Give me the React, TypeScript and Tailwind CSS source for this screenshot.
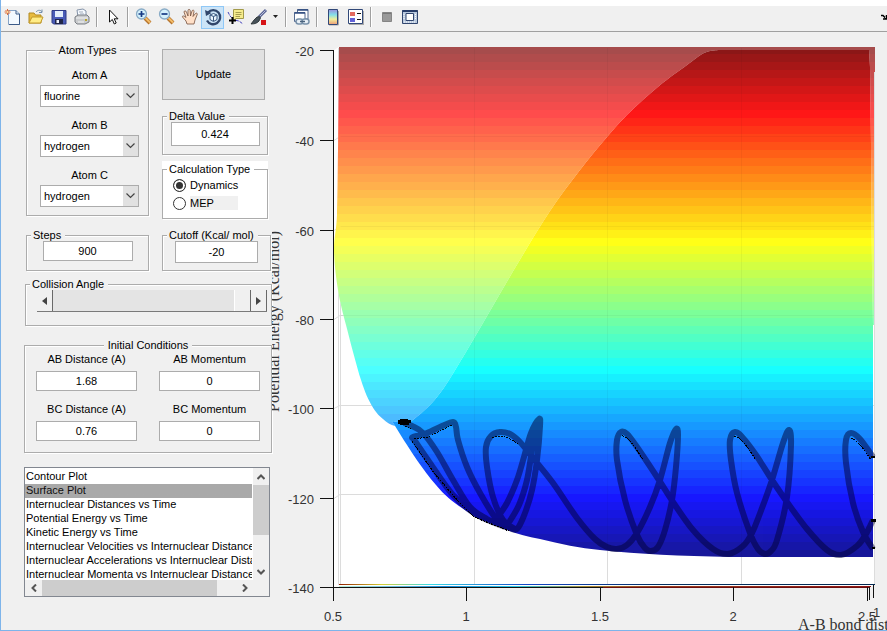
import type { ReactNode } from "react";

type Point = [number, number];

const surfaceBands = Array.from({ length: 64 }, (_, i) => {
    // jet colormap, 64 levels from the top of the surface to the bottom
    const level = (64 - i) / 64;
    const channel = (centre: number) =>
        Math.round(255 * Math.max(0, Math.min(1, 1.5 - Math.abs(4 * level - centre))));
    return { y: 46 + i * 8, fill: `rgb(${channel(3)},${channel(2)},${channel(1)})` };
});

const smooth = (points: Point[]) => {
    let d = `M${points[0][0]} ${points[0][1]}`;
    for (let i = 0; i < points.length - 1; i++) {
        const a = points[Math.max(0, i - 1)];
        const b = points[i];
        const c = points[i + 1];
        const e = points[Math.min(points.length - 1, i + 2)];
        d += `C${b[0] + (c[0] - a[0]) / 6} ${b[1] + (c[1] - a[1]) / 6} ${c[0] - (e[0] - b[0]) / 6} ${c[1] - (e[1] - b[1]) / 6} ${c[0]} ${c[1]}`;
    }
    return d;
};

const backEdge: Point[] = [[338, 150], [337, 215], [334, 250], [338, 290], [346, 325], [361, 380], [372, 406], [383, 419], [395, 426], [409, 424]];

const frontTop: Point[] = [[718, 50], [704, 53], [687, 65], [659, 86], [630, 112], [607, 137], [580, 170], [550, 211], [518, 263], [483, 323], [449, 380], [430, 405], [408, 424]];

const frontBottom = "L392 421L400 434C410 450 423 470 436 485C444 495 453 502 462 508L475 517C500 528 515 534 540 539C560 544 580 548 600 550C640 554 680 556 730 557H873V325L872 268L871 145L870 67L869 50Z";

const trajectory: Point[][] = [
    [[404, 423], [412, 426], [423, 433], [437, 452], [453, 480], [470, 507], [487, 519], [505, 527]],
    [[505, 527], [477, 515], [453, 495], [430, 463], [415, 441], [413, 437], [427, 433], [442, 426], [453, 422], [456, 427], [458, 440], [467, 467], [480, 493], [497, 520], [508, 528]],
    [[497, 518], [507, 503], [517, 480], [524, 457], [531, 433], [539, 419], [540, 426], [537, 460], [532, 490], [525, 513], [517, 529], [508, 527]],
    [[508, 524], [519, 505], [527, 480], [532, 450], [537, 424]],
    [[515, 529], [503, 520], [493, 497], [487, 467], [486, 447], [491, 436], [500, 432], [510, 434], [520, 442], [533, 458], [553, 483], [577, 518], [595, 539], [607, 547], [617, 549], [627, 545], [637, 533], [650, 507], [660, 480], [670, 443], [676, 429], [678, 435], [676, 467], [672, 500], [665, 530], [658, 547], [651, 551], [645, 548], [637, 535], [625, 500], [617, 460], [617, 440], [621, 432], [627, 434], [637, 447], [657, 477], [673, 502], [693, 530], [713, 549], [728, 554], [743, 546], [752, 533], [762, 508], [772, 480], [783, 443], [789, 430], [791, 445], [787, 497], [777, 540], [771, 551], [765, 554], [758, 549], [750, 533], [737, 493], [731, 460], [730, 440], [735, 432], [743, 438], [756, 455], [772, 480], [787, 502], [807, 529], [827, 550], [841, 555], [857, 546], [866, 534], [873, 520]],
    [[873, 549], [863, 532], [853, 503], [846, 463], [846, 440], [851, 433], [860, 439], [873, 457]],
];

const yTicks = [
    { y: 50, label: "-20" },
    { y: 140, label: "-40" },
    { y: 230, label: "-60" },
    { y: 319, label: "-80" },
    { y: 408, label: "-100" },
    { y: 498, label: "-120" },
    { y: 587, label: "-140" },
];

const xTicks = [
    { x: 333, label: "0.5" },
    { x: 466, label: "1" },
    { x: 600, label: "1.5" },
    { x: 733, label: "2" },
    { x: 867, label: "2.5" },
];

const plots = [
    "Contour Plot",
    "Surface Plot",
    "Internuclear Distances vs Time",
    "Potential Energy vs Time",
    "Kinetic Energy vs Time",
    "Internuclear Velocities vs Internuclear Distance",
    "Internuclear Accelerations vs Internuclear Distance",
    "Internuclear Momenta vs Internuclear Distance",
];

const ToolButton = ({ label, active, children }: { label: string; active?: boolean; children: ReactNode }) => (
    <button
        type="button"
        aria-label={label}
        className={`flex h-[23px] w-[23px] shrink-0 items-center justify-center ${active ? "border border-[#90c8f6] bg-[#cce4f7]" : ""}`}
    >
        <svg width="18" height="18" viewBox="0 0 18 18" className="shrink-0" fill="none">
            {children}
        </svg>
    </button>
);

const Separator = () => <div className="mx-[3px] h-5 w-0.5 shrink-0 border-l border-[#a0a0a0] bg-white" />;

const Magnifier = ({ plus }: { plus?: boolean }) => (
    <>
        <path d="M10 10L15 15" stroke="#b7742c" strokeWidth="4" />
        <path d="M10.500 10L15 14.500" stroke="#f4bd69" strokeWidth="2" />
        <circle cx="6.500" cy="6" r="5" fill="#d4f1fc" stroke="#88abc6" strokeWidth="1.300" />
        <path d={plus ? "M3.500 6H9.500M6.500 3V9" : "M3.500 6H9.500"} stroke="#163a84" strokeWidth="1.700" />
    </>
);

const Toolbar = () => (
    <div className="flex h-[26px] items-center overflow-hidden border-b border-[#a0a0a0] bg-[#f0f0f0] pb-[3px]">
        <ToolButton label="New Figure">
            <path d="M4.500 2.500H12L15.500 6V16.500H4.500Z" fill="#f3f9ff" stroke="#86a3c6" />
            <path d="M12 2.500V6H15.500M15.500 6V16.500H5" stroke="#3b5a88" />
            <path d="M3.500 1V7M.5 4H6.500M1.500 2L5.500 6M5.500 2L1.500 6" stroke="#df6d3c" />
            <circle cx="3.500" cy="4" r="1" fill="#ffe4a0" />
        </ToolButton>
        <ToolButton label="Open File">
            <path d="M2 15V5H7L8.500 7H14V15Z" fill="#e8bb40" stroke="#b18a22" />
            <path d="M2 15L5 9H16L13.500 15Z" fill="#ffec86" stroke="#c39a2a" />
            <path d="M9 4C11 1.500 14 2 15 4M15 1.500V4.500H12" stroke="#7491ae" />
        </ToolButton>
        <ToolButton label="Save Figure">
            <path d="M2 2.500H16V16H3.500L2 14.500Z" fill="#4a5cb8" stroke="#2f3b85" />
            <path d="M5 3H13V9H5Z" fill="#e3eefb" />
            <path d="M5 11H13V16H5Z" fill="#202648" />
            <path d="M6.500 12H9V15H6.500Z" fill="#f1f4ff" />
        </ToolButton>
        <ToolButton label="Print Figure">
            <path d="M5 9L4 2L10 1L13 3V9Z" fill="#f6faff" stroke="#8493a8" />
            <path d="M2 9L5 7H14L16 9V14L12 16H4L2 14Z" fill="#c9cbcd" stroke="#7a7e84" />
            <path d="M3 10H15M5 14H11" stroke="#f3f4f5" />
            <path d="M6 4H10M7 6H11" stroke="#a0abba" />
            <path d="M12 12H14" stroke="#b7a32d" strokeWidth="2" />
        </ToolButton>
        <Separator />
        <ToolButton label="Edit Plot">
            <path d="M5.500 2V14L8.300 11.500L10.300 16L12.200 15L10.200 10.800H14Z" fill="#fff" stroke="#111" />
        </ToolButton>
        <Separator />
        <ToolButton label="Zoom In"><Magnifier plus /></ToolButton>
        <ToolButton label="Zoom Out"><Magnifier /></ToolButton>
        <ToolButton label="Pan">
            <path d="M6 16L5 13L1.500 9C1 7.500 3 7.500 5 9.500L3 4C3 2.500 5 2.500 5.500 4L7 8V2.500C7 1 9 1 9.200 2.500L9.500 8L11 3C11.500 1.500 13.300 2 13 3.500L12 8.500L14.500 5.500C15.500 4.500 17 5.500 16 7L14 12L13 16Z" fill="#ffe0c8" stroke="#76513e" strokeWidth=".8" />
        </ToolButton>
        <ToolButton label="Rotate 3D" active>
            <path d="M4 4.500A7 7 0 1 1 3 12.500" stroke="#31466b" strokeWidth="2.300" />
            <path d="M1 2L2 8L7.500 5Z" fill="#31466b" />
            <path d="M6 7L9.500 5.500L13 7V11.500L9.500 13.500L6 11.500ZM6 7L9.500 8.500L13 7M9.500 8.500V13" fill="#edf7ff" stroke="#36537b" />
        </ToolButton>
        <ToolButton label="Data Cursor">
            <path d="M1 4L3 8L7 12L12 13L16 16" stroke="#4544bd" strokeDasharray="3 1" />
            <path d="M6.500 1.500H16.500V10.500H9L6.500 12.500Z" fill="#f5eb8b" stroke="#a29a4a" />
            <path d="M8.500 4.500H14.500M8.500 6.500H14.500M8.500 8.500H13" stroke="#a59c50" />
            <path d="M2 12.500H9M5.500 9V16" stroke="#000" strokeWidth="2" />
        </ToolButton>
        <ToolButton label="Brush">
            <path d="M16 2L9 9" stroke="#5a6596" strokeWidth="3" />
            <path d="M15.500 2.500L9 9" stroke="#b7bdd8" />
            <path d="M9.500 8.500L7 9L4 12L1 16C5 16 7.500 15 9 13L10.500 10Z" fill="#465158" stroke="#20282b" strokeWidth=".8" />
            <path d="M11 12H16V17H11Z" fill="#d61316" />
        </ToolButton>
        <button type="button" aria-label="Brush options" className="flex h-[23px] w-3 shrink-0 items-center justify-center">
            <svg width="6" height="4" viewBox="0 0 6 4"><path d="M0 0H5L2.500 3Z" fill="#222" /></svg>
        </button>
        <Separator />
        <ToolButton label="Link Plot">
            <path d="M4.500 1.500H15V11H4.500Z" fill="#fff" stroke="#52698f" />
            <path d="M4.500 2H15" stroke="#304c80" strokeWidth="1.500" />
            <path d="M1.500 4.500H12V13.500H1.500Z" fill="#fff" stroke="#52698f" />
            <path d="M1.500 5H12" stroke="#304c80" strokeWidth="1.500" />
            <rect x="3" y="11" width="7" height="5" rx="2.500" fill="#e7eff6" stroke="#7891aa" strokeWidth="1.500" />
            <rect x="9" y="11" width="7" height="5" rx="2.500" fill="#e7eff6" stroke="#7891aa" strokeWidth="1.500" />
            <path d="M7 13.500H12" stroke="#49627c" strokeWidth="1.500" />
        </ToolButton>
        <Separator />
        <ToolButton label="Insert Colorbar">
            <defs>
                <linearGradient id="colorbar" x1="0" y1="0" x2="0" y2="1">
                    <stop offset="0" stopColor="#9b8edc" />
                    <stop offset=".35" stopColor="#83e0e9" />
                    <stop offset=".65" stopColor="#f1ef9a" />
                    <stop offset="1" stopColor="#ec9b78" />
                </linearGradient>
            </defs>
            <path d="M14.500 3V17H5" stroke="#aaa" />
            <path d="M4.500 1.500H13.500V16.500H4.500Z" fill="url(#colorbar)" stroke="#314878" />
        </ToolButton>
        <ToolButton label="Insert Legend">
            <path d="M2 3V17H17V3" fill="#aaa" />
            <path d="M1.500 1.500H15.500V15.500H1.500Z" fill="#fff" stroke="#314878" />
            <path d="M3 4H8V8H3Z" fill="#e46b60" />
            <path d="M3 10H8V14H3Z" fill="#6262d7" />
            <path d="M10 5.500H14M10 11.500H14" stroke="#111" />
        </ToolButton>
        <Separator />
        <ToolButton label="Hide Plot Tools">
            <path d="M4.500 4.500H13.500V13.500H4.500Z" fill="#999" stroke="#858585" />
            <path d="M5 5.500H13" stroke="#777" />
        </ToolButton>
        <ToolButton label="Show Plot Tools">
            <path d="M1.500 2.500H16.500V15.500H1.500Z" fill="#b9c9de" stroke="#31466f" />
            <path d="M1.500 3H16.500" stroke="#273d69" strokeWidth="2" />
            <path d="M5 5.500H12.500V12.500H5Z" fill="#fff" stroke="#31466f" />
            <path d="M3 6V12M14.500 6V12M3 14H15" stroke="#fff" strokeDasharray="1 1" />
        </ToolButton>
        <svg width="6" height="6" viewBox="0 0 6 6" className="ml-auto shrink-0">
            <path d="M0 1.500H2L5 4.500M5.500 1V5H2" fill="none" stroke="#000" strokeWidth="1.500" />
        </svg>
    </div>
);

const Group = ({ title, centered, className, children }: { title: string; centered?: boolean; className?: string; children: ReactNode }) => (
    <fieldset className={`min-w-0 border border-[#acacac] shadow-[inset_1px_1px_0_#fff,1px_1px_0_#fff] ${className ?? ""}`}>
        <legend className={`bg-inherit leading-3 ${centered ? "mx-auto px-1" : "ml-1 pr-1 pl-0.5"}`}>{title}</legend>
        {children}
    </fieldset>
);

const inputStyle = "block border border-[#acacac] bg-white text-center text-[11px]";

const AtomSelect = ({ id, label, value }: { id: string; label: string; value: string }) => (
    <div className="flex flex-col items-center gap-1">
        <label htmlFor={id} className="leading-3">{label}</label>
        <div className="relative">
            <select
                id={id}
                defaultValue={value}
                className="block h-[22px] w-[99px] appearance-none border border-[#acacac] bg-white pl-[3px] text-[11px]"
            >
                <option>fluorine</option>
                <option>hydrogen</option>
            </select>
            <span className="pointer-events-none absolute inset-y-px right-px flex w-[15px] items-center justify-center bg-[#e1e1e1]">
                <svg width="9" height="6" viewBox="0 0 9 6"><path d="M.5 .5L4.500 4.500L8.500 .5" fill="none" stroke="#444" strokeWidth="1.200" /></svg>
            </span>
        </div>
    </div>
);

const Field = ({ id, label, value }: { id: string; label: string; value: string }) => (
    <div className="flex flex-col items-center gap-1.5">
        <label htmlFor={id} className="leading-3">{label}</label>
        <input id={id} defaultValue={value} className={`${inputStyle} h-5 w-full`} />
    </div>
);

const Radio = ({ label, checked }: { label: string; checked?: boolean }) => (
    <label className="flex h-[18px] items-center gap-1">
        <input
            type="radio"
            name="calculation"
            defaultChecked={checked}
            className="h-[13px] w-[13px] appearance-none rounded-full border border-[#333] bg-white checked:bg-[#333] checked:shadow-[inset_0_0_0_2px_#fff]"
        />
        <span className={checked ? "" : "w-12 bg-[#f0f0f0] leading-[14px]"}>{label}</span>
    </label>
);

const CollisionSlider = () => (
    <div className="mr-1 ml-[11px] flex h-[22px] border-b border-[#7a7a7a]">
        <button type="button" aria-label="Decrease angle" className="flex w-4 shrink-0 items-center justify-center border-r border-[#696969]">
            <svg width="5" height="8" viewBox="0 0 5 8"><path d="M5 0V8L0 4Z" fill="#444" /></svg>
        </button>
        <input
            type="range"
            aria-label="Collision Angle"
            defaultValue={100}
            className="h-full min-w-0 flex-1 appearance-none bg-[#e4e4e4] [&::-webkit-slider-thumb]:h-[21px] [&::-webkit-slider-thumb]:w-[17px] [&::-webkit-slider-thumb]:appearance-none [&::-webkit-slider-thumb]:border-r [&::-webkit-slider-thumb]:border-l [&::-webkit-slider-thumb]:border-l-white [&::-webkit-slider-thumb]:border-r-[#696969] [&::-webkit-slider-thumb]:bg-[#f0f0f0]"
        />
        <button type="button" aria-label="Increase angle" className="flex w-4 shrink-0 items-center justify-center border-r border-[#696969]">
            <svg width="5" height="8" viewBox="0 0 5 8"><path d="M0 0V8L5 4Z" fill="#444" /></svg>
        </button>
    </div>
);

const PlotList = () => (
    <div className="grid h-[130px] w-[246px] grid-cols-[1fr_16px] grid-rows-[1fr_16px] border border-[#828790] bg-white">
        <select
            size={8}
            aria-label="Plot type"
            defaultValue="Surface Plot"
            className="mr-px block h-full min-w-0 overflow-hidden pt-0.5 text-[11px] [scrollbar-width:none]"
        >
            {plots.map((plot) => (
                <option
                    key={plot}
                    className="h-[14px] min-h-0 p-0 pl-px leading-[14px] checked:bg-[#a9a9a9] checked:bg-linear-to-r checked:from-[#a9a9a9] checked:to-[#a9a9a9]"
                >
                    {plot}
                </option>
            ))}
        </select>
        <div className="flex flex-col items-center bg-[#f0f0f0]">
            <button type="button" aria-label="Scroll up" className="flex h-[17px] w-full items-center justify-center">
                <svg width="8" height="6" viewBox="0 0 8 6"><path d="M.5 5L4 1.500L7.500 5" fill="none" stroke="#555" strokeWidth="2" /></svg>
            </button>
            <div className="h-[50px] w-full bg-[#cdcdcd]" />
            <button type="button" aria-label="Scroll down" className="mt-auto flex h-[17px] w-full items-center justify-center">
                <svg width="8" height="6" viewBox="0 0 8 6"><path d="M.5 1L4 4.500L7.500 1" fill="none" stroke="#555" strokeWidth="2" /></svg>
            </button>
        </div>
        <div className="flex items-center bg-[#f0f0f0]">
            <button type="button" aria-label="Scroll left" className="flex h-full w-[17px] items-center justify-center">
                <svg width="6" height="8" viewBox="0 0 6 8"><path d="M5 .5L1.500 4L5 7.500" fill="none" stroke="#555" strokeWidth="2" /></svg>
            </button>
            <div className="h-full w-[175px] bg-[#cdcdcd]" />
            <button type="button" aria-label="Scroll right" className="ml-auto flex h-full w-[17px] items-center justify-center">
                <svg width="6" height="8" viewBox="0 0 6 8"><path d="M1 .5L4.500 4L1 7.500" fill="none" stroke="#555" strokeWidth="2" /></svg>
            </button>
        </div>
        <div className="bg-[#f0f0f0]" />
    </div>
);

const Controls = () => (
    <div className="w-[271px] shrink-0 pt-3 pl-[23px]">
        <div className="flex items-start gap-[13px] pl-0.5">
            <Group title="Atom Types" centered className="h-[172px] w-[123px] bg-[#f0f0f0]">
                <div className="flex flex-col gap-3 pt-[13px] pl-1">
                    <AtomSelect id="atom-a" label="Atom A" value="fluorine" />
                    <AtomSelect id="atom-b" label="Atom B" value="hydrogen" />
                    <AtomSelect id="atom-c" label="Atom C" value="hydrogen" />
                </div>
            </Group>
            <div className="flex w-[106px] flex-col pt-[5px]">
                <button type="button" className="h-[51px] w-[103px] border border-[#adadad] bg-[#e1e1e1]">Update</button>
                <Group title="Delta Value" className="mt-2.5 h-[45px] bg-[#f0f0f0]">
                    <input aria-label="Delta Value" defaultValue="0.424" className={`${inputStyle} mx-auto h-6 w-[89px]`} />
                </Group>
                <div className="mt-1.5 bg-white pt-0.5">
                    <Group title="Calculation Type" className="h-14 bg-white">
                        <div className="pt-px pl-2.5">
                            <Radio label="Dynamics" checked />
                            <Radio label="MEP" />
                        </div>
                    </Group>
                </div>
            </div>
        </div>
        <div className="mt-2.5 flex gap-[13px] pl-0.5">
            <Group title="Steps" className="h-[42px] w-[123px] bg-[#f0f0f0]">
                <input aria-label="Steps" defaultValue="900" className={`${inputStyle} mx-auto h-5 w-[90px]`} />
            </Group>
            <Group title="Cutoff (Kcal/ mol)" className="h-[42px] w-[109px] bg-[#f0f0f0]">
                <input aria-label="Cutoff (Kcal/ mol)" defaultValue="-20" className={`${inputStyle} mx-auto h-[22px] w-[83px]`} />
            </Group>
        </div>
        <Group title="Collision Angle" className="mt-[7px] ml-px h-12 bg-[#f0f0f0]">
            <CollisionSlider />
        </Group>
        <Group title="Initial Conditions" centered className="mt-[13px] h-[114px] bg-[#f0f0f0]">
            <div className="grid grid-cols-2 gap-x-[22px] gap-y-3 px-[11px] pt-0.5">
                <Field id="ab-distance" label="AB Distance (A)" value="1.68" />
                <Field id="ab-momentum" label="AB Momentum" value="0" />
                <Field id="bc-distance" label="BC Distance (A)" value="0.76" />
                <Field id="bc-momentum" label="BC Momentum" value="0" />
            </div>
        </Group>
        <div className="mt-3.5">
            <PlotList />
        </div>
    </div>
);

const Bands = () => (
    <>
        {surfaceBands.map((band) => (
            <rect key={band.y} x="330" y={band.y} width="548" height="8" fill={band.fill} />
        ))}
    </>
);

const SurfacePlot = () => (
    <svg viewBox="272 32 615 598" className="block h-auto min-w-0 flex-1" role="img" aria-label="Surface Plot">
        <defs>
            <clipPath id="back">
                <path d={`${smooth(backEdge)}L445 410L500 325H874V72H875V47H339Z`} />
            </clipPath>
            <clipPath id="front">
                <path d={smooth(frontTop) + frontBottom} />
            </clipPath>
            <linearGradient id="floorTop">
                <stop offset="0" stopColor="#902000" />
                <stop offset=".08" stopColor="#d6cf35" />
                <stop offset=".17" stopColor="#39dce8" />
                <stop offset=".35" stopColor="#1246c7" />
                <stop offset=".6" stopColor="#04305f" />
                <stop offset="1" stopColor="#03284f" />
            </linearGradient>
            <linearGradient id="floorBottom">
                <stop offset="0" stopColor="#b9f0d8" />
                <stop offset=".2" stopColor="#168bdc" />
                <stop offset=".33" stopColor="#28cbe4" />
                <stop offset=".46" stopColor="#a38b30" />
                <stop offset=".6" stopColor="#9a3d1d" />
                <stop offset="1" stopColor="#8f1414" />
            </linearGradient>
        </defs>

        <path d="M334 50L339 47H875V584L870 587H334Z" fill="#fff" />
        <path
            d="M338.500 48V585M340.500 48V585M474.500 48V585M607.500 48V585M741.500 48V585M874.500 48V585M334 140.500L340 136.500H875M334 230.500L340 226.500H875M334 319.500L340 315.500H875M334 408.500L340 405.500H875M334 498.500L340 494.500H875"
            fill="none"
            stroke="#dcdcdc"
        />

        <g shapeRendering="crispEdges">
            <g clipPath="url(#back)">
                <rect x="330" y="40" width="548" height="400" fill="#fff" />
                <g opacity=".7"><Bands /></g>
            </g>
            <g clipPath="url(#front)">
                <rect x="380" y="40" width="498" height="520" fill="#fff" />
                <g opacity=".91"><Bands /></g>
            </g>
        </g>
        <path d="M474.500 48V494M607.500 48V550M741.500 48V556M340.500 136.500H874M340.500 226.500H874M340.500 315.500H874" fill="none" stroke="#000" opacity=".04" />

        <g fill="none" stroke="#000034" strokeWidth="6" strokeLinejoin="round" opacity=".5">
            <path d={trajectory.map(smooth).join("")} />
        </g>
        <path
            d="M405 426L411 429M412 441L434 473L458 501L474 517L509 531M414 439L428 437L452 425M492 438Q502 432 518 444M622 436Q628 435 643 460M734 436Q743 438 755 459M851 438Q858 440 871 460"
            fill="none"
            stroke="#000"
            strokeDasharray="2 1"
            shapeRendering="crispEdges"
        />
        <path d="M400 419H408V420H411V423H409V425H400V424H398V420H400ZM871 456H875V458H871ZM871 519H876V522H871ZM872 547H875V549H872Z" fill="#000" shapeRendering="crispEdges" />

        <g shapeRendering="crispEdges">
            <rect x="339" y="584" width="536" height="1" fill="url(#floorTop)" />
            <rect x="339" y="586" width="532" height="1" fill="url(#floorBottom)" />
            <rect x="333" y="50" width="1" height="538" fill="#111" />
            <rect x="333" y="587" width="270" height="1" fill="#111" />
            <rect x="603" y="587" width="267" height="1" fill="#6b1010" />
            {yTicks.map((tick) => (
                <rect key={tick.label} x="320" y={tick.y} width="14" height="1" fill="#111" />
            ))}
            {xTicks.map((tick) => (
                <rect key={tick.label} x={tick.x} y="587" width="1" height="14" fill="#111" />
            ))}
            <path d="M869 587H870V600H869ZM873 585H874V598H873Z" fill="#111" />
        </g>

        <g className="text-[13px]" fill="#333">
            {yTicks.map((tick) => (
                <text key={tick.label} x="314" y={tick.y + 6} textAnchor="end">{tick.label}</text>
            ))}
            {xTicks.map((tick) => (
                <text key={tick.label} x={tick.x} y="621" textAnchor="middle">{tick.label}</text>
            ))}
            <text x="873" y="617">1</text>
        </g>
        <g className="font-['Liberation_Serif',serif] text-[16px]" fill="#333">
            <text transform="translate(279 412) rotate(-90)">Potential Energy (Kcal/mol)</text>
            <text x="798" y="630">A-B bond distance</text>
        </g>
    </svg>
);

const App = () => {
    return (
        <div className="border-b border-l border-[#7eb4ea] bg-[#f0f0f0] font-['Liberation_Sans',Arial,sans-serif] text-[11px] text-black">
            <div className="h-1.5 bg-white" />
            <Toolbar />
            <div className="flex items-start">
                <Controls />
                <SurfacePlot />
            </div>
        </div>
    );
};

export default App;
